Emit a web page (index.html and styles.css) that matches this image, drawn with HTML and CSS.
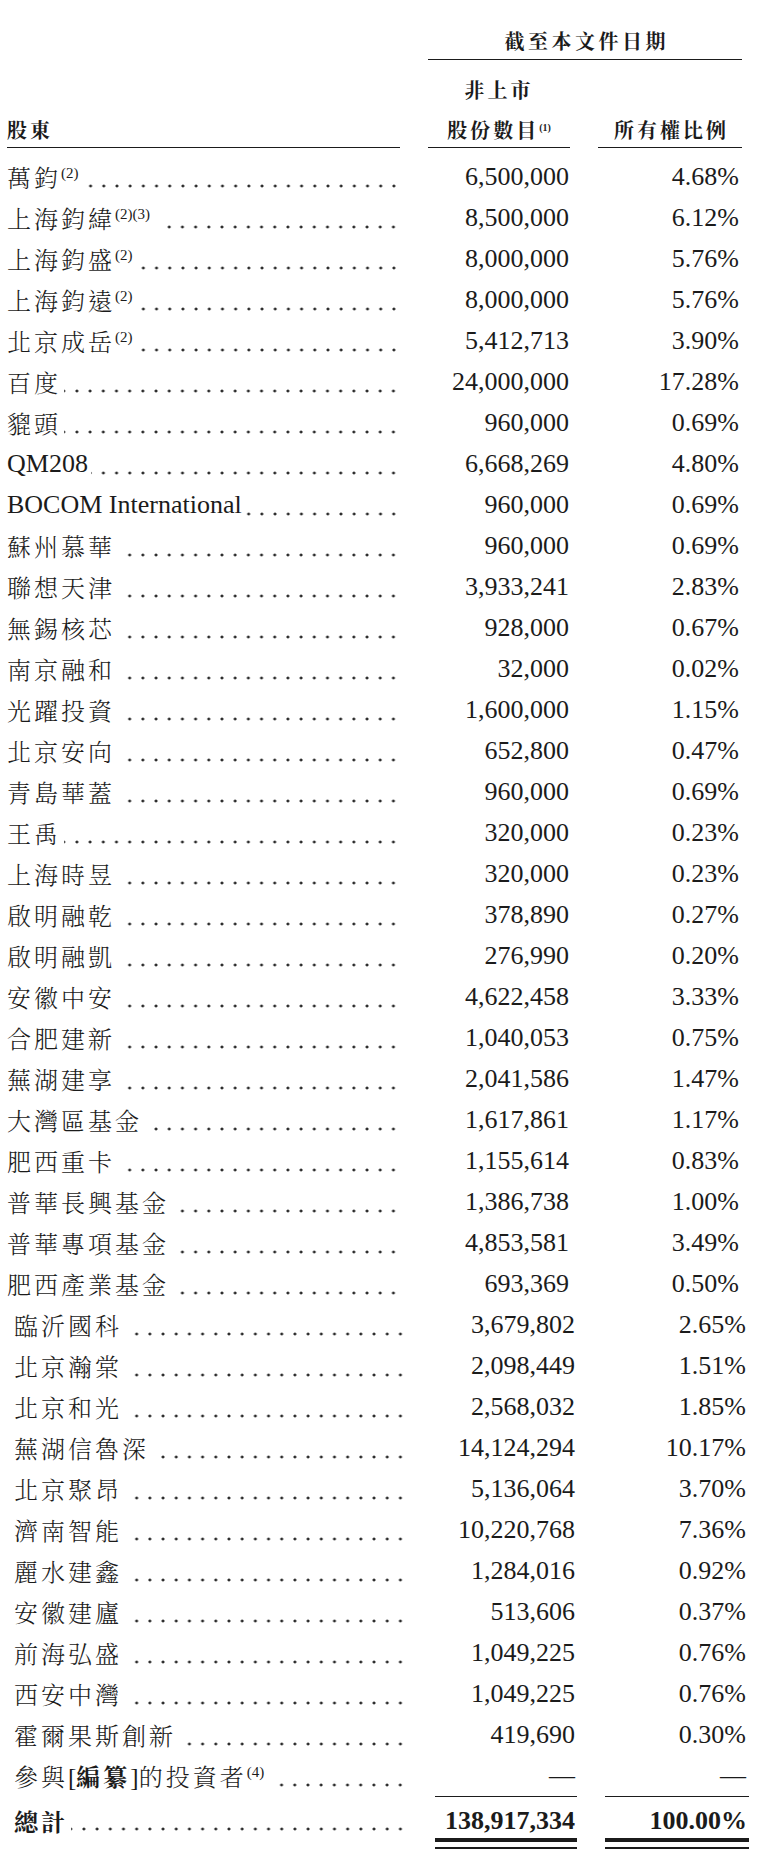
FILE: index.html
```html
<!DOCTYPE html>
<html lang="zh-Hant">
<head>
<meta charset="utf-8">
<title>股東</title>
<link rel="stylesheet" href="styles.css">
</head>
<body>
<div class="page">
  <div class="h-top">
    <div></div>
    <div class="h-date">截至本文件日期</div>
  </div>
  <div class="h-sub">
    <div class="h-cell h-left">股東</div>
    <div class="h-cell h-mid"><div class="h-line">非上市</div><div class="h-line">股份數目<sup class="fn-h">(1)</sup></div></div>
    <div class="h-cell h-right">所有權比例</div>
  </div>

  <div class="rows upper">
    <div class="row"><div class="name"><span class="cjk">萬鈞<sup class="fn">(2)</sup></span><span class="lead"></span></div><div class="num">6,500,000</div><div class="pct">4.68%</div></div>
    <div class="row"><div class="name"><span class="cjk">上海鈞緯<sup class="fn">(2)(3)</sup></span><span class="lead"></span></div><div class="num">8,500,000</div><div class="pct">6.12%</div></div>
    <div class="row"><div class="name"><span class="cjk">上海鈞盛<sup class="fn">(2)</sup></span><span class="lead"></span></div><div class="num">8,000,000</div><div class="pct">5.76%</div></div>
    <div class="row"><div class="name"><span class="cjk">上海鈞遠<sup class="fn">(2)</sup></span><span class="lead"></span></div><div class="num">8,000,000</div><div class="pct">5.76%</div></div>
    <div class="row"><div class="name"><span class="cjk">北京成岳<sup class="fn">(2)</sup></span><span class="lead"></span></div><div class="num">5,412,713</div><div class="pct">3.90%</div></div>
    <div class="row"><div class="name"><span class="cjk">百度</span><span class="lead tight"></span></div><div class="num">24,000,000</div><div class="pct">17.28%</div></div>
    <div class="row"><div class="name"><span class="cjk">貔頭</span><span class="lead tight"></span></div><div class="num">960,000</div><div class="pct">0.69%</div></div>
    <div class="row"><div class="name"><span class="lat">QM208</span><span class="lead tight"></span></div><div class="num">6,668,269</div><div class="pct">4.80%</div></div>
    <div class="row"><div class="name"><span class="lat">BOCOM International</span><span class="lead tight"></span></div><div class="num">960,000</div><div class="pct">0.69%</div></div>
    <div class="row"><div class="name"><span class="cjk">蘇州慕華</span><span class="lead"></span></div><div class="num">960,000</div><div class="pct">0.69%</div></div>
    <div class="row"><div class="name"><span class="cjk">聯想天津</span><span class="lead"></span></div><div class="num">3,933,241</div><div class="pct">2.83%</div></div>
    <div class="row"><div class="name"><span class="cjk">無錫核芯</span><span class="lead"></span></div><div class="num">928,000</div><div class="pct">0.67%</div></div>
    <div class="row"><div class="name"><span class="cjk">南京融和</span><span class="lead"></span></div><div class="num">32,000</div><div class="pct">0.02%</div></div>
    <div class="row"><div class="name"><span class="cjk">光躍投資</span><span class="lead"></span></div><div class="num">1,600,000</div><div class="pct">1.15%</div></div>
    <div class="row"><div class="name"><span class="cjk">北京安向</span><span class="lead"></span></div><div class="num">652,800</div><div class="pct">0.47%</div></div>
    <div class="row"><div class="name"><span class="cjk">青島華蓋</span><span class="lead"></span></div><div class="num">960,000</div><div class="pct">0.69%</div></div>
    <div class="row"><div class="name"><span class="cjk">王禹</span><span class="lead tight"></span></div><div class="num">320,000</div><div class="pct">0.23%</div></div>
    <div class="row"><div class="name"><span class="cjk">上海時昱</span><span class="lead"></span></div><div class="num">320,000</div><div class="pct">0.23%</div></div>
    <div class="row"><div class="name"><span class="cjk">啟明融乾</span><span class="lead"></span></div><div class="num">378,890</div><div class="pct">0.27%</div></div>
    <div class="row"><div class="name"><span class="cjk">啟明融凱</span><span class="lead"></span></div><div class="num">276,990</div><div class="pct">0.20%</div></div>
    <div class="row"><div class="name"><span class="cjk">安徽中安</span><span class="lead"></span></div><div class="num">4,622,458</div><div class="pct">3.33%</div></div>
    <div class="row"><div class="name"><span class="cjk">合肥建新</span><span class="lead"></span></div><div class="num">1,040,053</div><div class="pct">0.75%</div></div>
    <div class="row"><div class="name"><span class="cjk">蕪湖建享</span><span class="lead"></span></div><div class="num">2,041,586</div><div class="pct">1.47%</div></div>
    <div class="row"><div class="name"><span class="cjk">大灣區基金</span><span class="lead"></span></div><div class="num">1,617,861</div><div class="pct">1.17%</div></div>
    <div class="row"><div class="name"><span class="cjk">肥西重卡</span><span class="lead"></span></div><div class="num">1,155,614</div><div class="pct">0.83%</div></div>
    <div class="row"><div class="name"><span class="cjk">普華長興基金</span><span class="lead tight"></span></div><div class="num">1,386,738</div><div class="pct">1.00%</div></div>
    <div class="row"><div class="name"><span class="cjk">普華專項基金</span><span class="lead tight"></span></div><div class="num">4,853,581</div><div class="pct">3.49%</div></div>
    <div class="row"><div class="name"><span class="cjk">肥西產業基金</span><span class="lead tight"></span></div><div class="num">693,369</div><div class="pct">0.50%</div></div>
  </div>

  <div class="rows lower">
    <div class="row"><div class="name"><span class="cjk">臨沂國科</span><span class="lead"></span></div><div class="num">3,679,802</div><div class="pct">2.65%</div></div>
    <div class="row"><div class="name"><span class="cjk">北京瀚棠</span><span class="lead"></span></div><div class="num">2,098,449</div><div class="pct">1.51%</div></div>
    <div class="row"><div class="name"><span class="cjk">北京和光</span><span class="lead"></span></div><div class="num">2,568,032</div><div class="pct">1.85%</div></div>
    <div class="row"><div class="name"><span class="cjk">蕪湖信魯深</span><span class="lead"></span></div><div class="num">14,124,294</div><div class="pct">10.17%</div></div>
    <div class="row"><div class="name"><span class="cjk">北京聚昂</span><span class="lead"></span></div><div class="num">5,136,064</div><div class="pct">3.70%</div></div>
    <div class="row"><div class="name"><span class="cjk">濟南智能</span><span class="lead"></span></div><div class="num">10,220,768</div><div class="pct">7.36%</div></div>
    <div class="row"><div class="name"><span class="cjk">麗水建鑫</span><span class="lead"></span></div><div class="num">1,284,016</div><div class="pct">0.92%</div></div>
    <div class="row"><div class="name"><span class="cjk">安徽建廬</span><span class="lead"></span></div><div class="num">513,606</div><div class="pct">0.37%</div></div>
    <div class="row"><div class="name"><span class="cjk">前海弘盛</span><span class="lead"></span></div><div class="num">1,049,225</div><div class="pct">0.76%</div></div>
    <div class="row"><div class="name"><span class="cjk">西安中灣</span><span class="lead"></span></div><div class="num">1,049,225</div><div class="pct">0.76%</div></div>
    <div class="row"><div class="name"><span class="cjk">霍爾果斯創新</span><span class="lead tight"></span></div><div class="num">419,690</div><div class="pct">0.30%</div></div>
    <div class="row last"><div class="name"><span class="cjk">參與<span class="br">[</span><b>編纂</b><span class="br">]</span>的投資者<sup class="fn">(4)</sup></span><span class="lead"></span></div><div class="num">—</div><div class="pct">—</div></div>
    <div class="row total"><div class="name"><span class="cjk">總計</span><span class="lead tight"></span></div><div class="num"><span class="tline">138,917,334</span></div><div class="pct"><span class="tline">100.00%</span></div></div>
  </div>
</div>
</body>
</html>
```

FILE: styles.css
```css
html, body {
  margin: 0;
  padding: 0;
  background: #ffffff;
}

body {
  color: #1b1b1b;
  font-family: "Liberation Serif", "Noto Serif CJK TC", "Noto Sans CJK TC", serif;
}

.page {
  width: 764px;
  padding: 28px 0 0 7px;
  box-sizing: border-box;
}

/* ---------- header ---------- */
.h-top {
  display: grid;
  grid-template-columns: 393px 314px;
  column-gap: 28px;
}

.h-date {
  font-family: "Noto Serif CJK TC", "Noto Sans CJK TC", sans-serif;
  font-weight: 700;
  font-size: 20px;
  letter-spacing: 3.5px;
  padding-left: 3.5px;
  line-height: 26px;
  text-align: center;
  padding-bottom: 5px;
  border-bottom: 1.5px solid #1b1b1b;
}

.h-sub {
  display: grid;
  grid-template-columns: 393px 142px 144px;
  column-gap: 28px;
  margin-top: 12.5px;
  align-items: end;
}

.h-cell {
  font-family: "Noto Serif CJK TC", "Noto Sans CJK TC", sans-serif;
  font-weight: 700;
  font-size: 20px;
  letter-spacing: 3px;
  line-height: 34px;
  border-bottom: 1.5px solid #1b1b1b;
}

.h-left {
  text-align: left;
}

.h-mid {
  display: flex;
  flex-direction: column;
  gap: 6px;
  text-align: center;
}

.h-right {
  text-align: center;
  padding-left: 3px;
}

.fn-h {
  font-family: "Liberation Serif", serif;
  font-size: 10px;
  font-weight: 700;
  letter-spacing: 0;
  line-height: 0;
  vertical-align: 7px;
}

/* ---------- rows ---------- */
.upper {
  margin-top: 8px;
}

.lower {
  padding-left: 7px;
}

.row {
  display: grid;
  grid-template-columns: 393px 142px 144px;
  column-gap: 28px;
  height: 41px;
  line-height: 41px;
}

.name {
  display: flex;
  align-items: stretch;
  white-space: nowrap;
  overflow: hidden;
}

.cjk {
  font-family: "Noto Serif CJK TC", "Noto Sans CJK TC", sans-serif;
  font-weight: 300;
  font-size: 24px;
  letter-spacing: 3px;
}

.cjk b {
  font-weight: 700;
}

.br {
  font-family: "Liberation Serif", serif;
  font-size: 25px;
  letter-spacing: 0;
}

.lat {
  font-family: "Liberation Serif", serif;
  font-size: 26px;
}

.fn {
  font-family: "Liberation Serif", serif;
  font-size: 15px;
  letter-spacing: 0;
  line-height: 0;
  vertical-align: 9px;
}

.lead {
  flex: 1;
  margin-left: 8px;
  background-image: radial-gradient(circle, #2b2b2b 0, #2b2b2b 1.2px, rgba(255,255,255,0) 1.75px);
  background-size: 13.2px 4px;
  background-repeat: repeat-x;
  background-position: right 0 top 28px;
}

.lead.tight {
  margin-left: 3px;
}

.num, .pct {
  font-family: "Liberation Serif", serif;
  font-size: 26px;
  text-align: right;
  white-space: nowrap;
}

.num {
  padding-right: 2px;
}

.pct {
  padding-right: 3px;
}

.upper .num {
  padding-right: 1px;
}

.row.last .num,
.row.last .pct {
  border-bottom: 1.5px solid #1b1b1b;
  box-sizing: border-box;
}

.row.total {
  margin-top: 8px;
  height: auto;
  line-height: 34px;
}

.row.total .cjk {
  font-weight: 700;
}

.row.total .lead {
  background-position: right 0 top 23px;
}

.row.total .num,
.row.total .pct {
  font-weight: 700;
  padding-right: 0;
  padding-bottom: 5px;
  border-bottom: 2px solid #1b1b1b;
}

.tline {
  display: block;
  border-bottom: 4px solid #1b1b1b;
  padding-right: 2px;
}
```
